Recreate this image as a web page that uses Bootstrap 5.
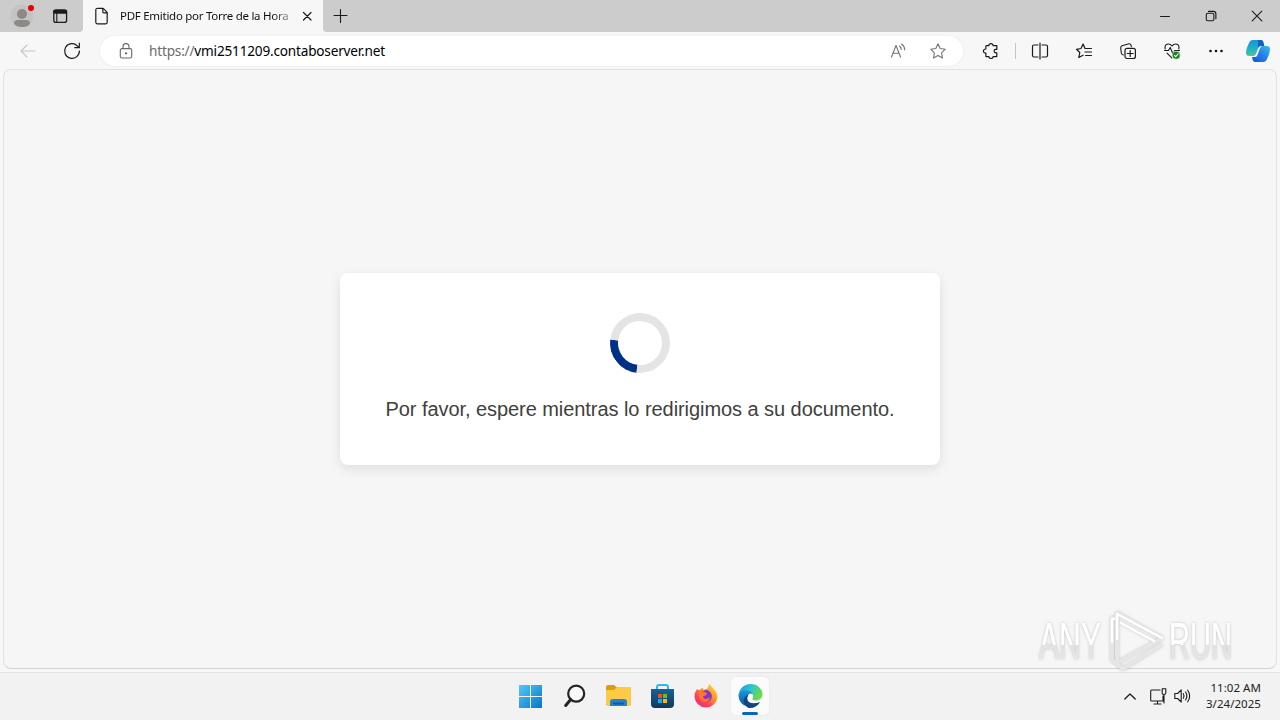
<!DOCTYPE html>
<html lang="es">
<head>
<meta charset="utf-8">
<meta name="viewport" content="width=device-width, initial-scale=1">
<title>PDF Emitido por Torre de la Hora</title>
<link href="https://cdn.jsdelivr.net/npm/bootstrap@5.3.0/dist/css/bootstrap.min.css" rel="stylesheet">
<style>
body{font-family:"Noto Sans","Open Sans",sans-serif;background:#f7f7f7;color:#111;height:720px}
svg{display:block;fill:none;stroke:#1b1b1b;stroke-width:1.1;stroke-linecap:round;stroke-linejoin:round;overflow:visible}
.titlebar{height:32px;background:#f7f7f7}
.strip{background:#ccc;height:32px}
.strip-left{width:83px;border-bottom-right-radius:4px;padding-left:12px;gap:19px}
.strip-right{border-bottom-left-radius:4px;padding-left:7px}
.browser-tab{width:240px;padding-left:8px;background:#f7f7f7}
.tab-title{width:174px;margin-left:11px;font-size:11.5px;line-height:16px;letter-spacing:-.27px;color:#111;-webkit-mask-image:linear-gradient(90deg,#000 152px,rgba(0,0,0,.25) 174px)}
.winbtn{width:46px}
.toolbar{height:37px;padding-top:1px}
.cell{width:44px}
.address{width:863px;height:30px;margin-left:5px;border-radius:15px;box-shadow:0 0 3px rgba(0,0,0,.07)}
.lock{width:52px}
.url{font-size:13.6px;line-height:20px;letter-spacing:-.19px;color:#000;margin-left:-3px}
.url span{color:#6c6c6c}
.tools{width:317px}
.viewport{height:600px;margin:0 3px;background:#f6f6f6;border:1px solid #e2e2e2;border-bottom-color:#d3d3d3;border-radius:8px}
.notice{width:600px;height:192px;border-radius:8px;padding-top:40px;box-shadow:0 4px 12px rgba(0,0,0,.1)}
.loader{width:60px;height:60px;border:8px solid #e4e4e4;border-top-color:#003087;border-radius:50%;transform:rotate(231.6deg)}
.message{font-family:"Liberation Sans",Arial,sans-serif;font-size:20px;line-height:30px;letter-spacing:-.06px;color:#404040;margin-top:21px}
.taskbar{height:48px;margin-top:3px;padding-bottom:1px;background:#f2f2f2;border-top:1px solid #e3e3e3}
.active-app{width:38px;height:38px;background:#fbfbfb;border-radius:4px;box-shadow:0 0 1px rgba(0,0,0,.2)}
.active-app i{width:16px;height:3px;border-radius:2px;background:#0868b8;bottom:0;left:11px}
.clock{font-size:11.5px;line-height:16px;color:#222;letter-spacing:.05px}
.tray{right:19px;top:0;height:46px}
.brandmark{left:1030px;top:604px;pointer-events:none}
</style>
</head>
<body class="overflow-hidden position-relative">
<header>
<div class="titlebar d-flex">
  <div class="strip strip-left d-flex align-items-center">
    <svg width="21" height="28" viewBox="0 0 21 28" stroke="none"><circle cx="10" cy="14" r="11.5" fill="#c3c3c3" stroke="none"/><g fill="#8d8987" stroke="none"><circle cx="10" cy="12" r="5"/><path d="M2 21.500q0-3.500 4-3.500h8q4 0 4 3.500-2 3.500-8 3.500T2 21.500z"/></g><circle cx="19" cy="6" r="3" fill="#e90000" stroke="none"/></svg>
    <svg width="16" height="16" viewBox="0 0 16 16"><rect x="1.800" y="1.800" width="12.800" height="12.600" rx="2.200" stroke-width="1.300"/><path d="M2.300 3h11.800M2.300 4.600h11.800" stroke-width="2.200"/><path d="M4.800 5v9"/></svg>
  </div>
  <div class="browser-tab d-flex align-items-center">
    <svg class="ms-1 flex-shrink-0" width="14" height="18" viewBox="0 0 14 18"><path d="M2.800 1.300h5.400l4 4v9.900a1.600 1.600 0 0 1-1.600 1.600H2.400A1.600 1.600 0 0 1 .8 15.200V2.900a1.600 1.600 0 0 1 2-1.600zM7.800 1.400v3.400q0 1 1 1h3.300" stroke-width="1.200"/></svg>
    <div class="tab-title text-nowrap flex-shrink-0">PDF Emitido por Torre de la Hora</div>
    <svg class="ms-2 flex-shrink-0" width="10" height="10" viewBox="0 0 10 10"><path d="M1.500 1.500l7.500 7.500M9 1.500L1.500 9" stroke-width="1.200"/></svg>
  </div>
  <div class="strip strip-right flex-grow-1 d-flex align-items-center">
    <svg width="20" height="16" viewBox="0 0 20 16"><path d="M10.500 1.500v13M4 7.500h13"/></svg>
    <div class="ms-auto d-flex">
      <div class="winbtn d-flex justify-content-center"><svg width="12" height="12" viewBox="0 0 12 12"><path d="M1.500 6.500h9" stroke-width="1"/></svg></div>
      <div class="winbtn d-flex justify-content-center"><svg width="12" height="12" viewBox="0 0 12 12"><rect x="1.300" y="3.200" width="7.600" height="7.600" rx="1.500"/><path d="M3.500 1.400h4.800q2.600 0 2.600 2.600v4.800"/></svg></div>
      <div class="winbtn d-flex justify-content-center"><svg width="12" height="12" viewBox="0 0 12 12"><path d="M1.200 1.200l9.600 9.600M10.800 1.200l-9.600 9.600"/></svg></div>
    </div>
  </div>
</div>
<nav class="toolbar d-flex align-items-center" aria-label="Navegador">
  <div class="cell ms-1 d-flex justify-content-center ps-1"><svg width="16" height="14" viewBox="0 0 16 14" style="stroke:#c7c7c7"><path d="M15 7H1M7 1L1 7l6 6"/></svg></div>
  <div class="cell d-flex justify-content-center ps-1"><svg width="18" height="18" viewBox="0 0 18 18"><path d="M16.400 9a7.400 7.400 0 1 1-2.100-5.200L16 5.600M16.300 1.200v4.500h-4.500" stroke-width="1.200"/></svg></div>
  <div class="address bg-white d-flex align-items-center ms-2 flex-shrink-0">
    <div class="lock d-flex justify-content-center flex-shrink-0"><svg width="14" height="16" viewBox="0 0 14 16" style="stroke:#696969"><rect x="1.300" y="5.600" width="11.400" height="9.400" rx="1.600"/><path d="M4 5.300V3.600a3 3 0 0 1 6 0v1.700"/><circle cx="7" cy="10.300" r=".6" fill="#666"/></svg></div>
    <div class="url text-nowrap me-auto"><span>https://</span>vmi2511209.contaboserver.net</div>
    <svg class="flex-shrink-0" width="16" height="16" viewBox="0 0 16 16" style="stroke:#747474"><path d="M1.500 14L6 2.500 10.500 14M3 10.200h6M9.500 3q1.700 1.400 1.700 3.500M11.500 1q3.200 2.200 3.200 5.800"/></svg>
    <svg class="flex-shrink-0" width="16" height="16" viewBox="0 0 16 16" style="margin:0 17px 0 24px;stroke:#747474"><path d="M8 .8l2.200 4.700 5 .7-3.600 3.600.9 5.200L8 12.500 3.500 15l.9-5.200L.8 6.200l5-.7z"/></svg>
  </div>
  <div class="tools d-flex align-items-center">
    <div class="d-flex justify-content-center" style="width:52px"><svg width="16" height="16" viewBox="0 0 16 16" style="margin-left:3px"><path d="M3.300 2.600h2.600a2.100 1.900 0 0 1 4.200 0h3.700v3.800h-1a1.700 1.700 0 0 0 0 3.400h1v3.800h-3.700a2.100 1.900 0 0 1-4.200 0H2.900V10.200h-.4a2.100 2.100 0 0 1 0-4.200h.4V3z" stroke-width="1.200"/></svg></div>
    <div class="vr" style="height:16px;align-self:center;opacity:.22"></div>
    <div class="cell d-flex justify-content-center ms-1" style="margin-left:2px!important"><svg width="16" height="16" viewBox="0 0 16 16"><path d="M6 2H1.800Q.5 2 .5 3.500v9Q.5 14 2 14h4M8 0v16M10 2h4q1.500 0 1.500 1.500v9Q15.500 14 14 14h-4" stroke-width="1.200"/></svg></div>
    <div class="cell d-flex justify-content-center"><svg width="16" height="16" viewBox="0 0 16 16"><path d="M10.400 5.500H9L7.100 1 5 5.500.5 6.300l3.300 3.200-1 5 4.200-2.300M10.400 5.500h5M9 9h6.500M9.500 12.500h6" stroke-width="1.200"/></svg></div>
    <div class="cell d-flex justify-content-center"><svg width="16" height="16" viewBox="0 0 16 16"><path d="M3.300 12Q1.500 11.500 1.300 10L.7 5Q.5 3.500 2 2.800L9 .8q1.500-.3 2 1.400l.4 1.300"/><rect x="5" y="5.300" width="10.400" height="10.200" rx="2" stroke-width="1.200"/><path d="M10.200 7.500v6M7.200 10.500h6" stroke-width="1.200"/></svg></div>
    <div class="cell d-flex justify-content-center"><svg width="16" height="16" viewBox="0 0 16 16"><path d="M1.200 6C0 1 5-.5 8 3c3-3.500 8-2 6.800 3M.5 7.500h4L6.200 4.500 9 11l1.800-3.500h4.700M3 10.200l4.800 4.700"/><circle cx="12.200" cy="12.200" r="4" fill="#168024" stroke="#f7f7f7" stroke-width=".6"/><path d="M10.400 12.300l1.300 1.300 2.500-2.700" stroke="#fff"/></svg></div>
    <div class="cell d-flex justify-content-center"><svg width="16" height="4" viewBox="0 0 16 4"><g fill="#111" stroke="none"><circle cx="2.500" cy="2" r="1.300"/><circle cx="8" cy="2" r="1.300"/><circle cx="13.500" cy="2" r="1.300"/></g></svg></div>
    <svg class="flex-shrink-0" width="24" height="24" viewBox="0 0 24 24" style="margin-left:8px"><defs><linearGradient id="ca" x1="0" y1="0" x2="0" y2="1"><stop stop-color="#1594df"/><stop offset=".55" stop-color="#22b0c8"/><stop offset="1" stop-color="#4cc98c"/></linearGradient><linearGradient id="cb" x1="1" y1="0" x2="0" y2="1"><stop stop-color="#35c1ee"/><stop offset=".5" stop-color="#257fe9"/><stop offset="1" stop-color="#1551d7"/></linearGradient></defs><g stroke="none"><path d="M7 1h8q2 0 2.500 3L18 6h-3q-2 0-2.700 2.500l-2 5.500q-.8 3-3.300 3H3q-3 0-3-3Q0 10 3 4q1-3 4-3z" fill="url(#ca)"/><path d="M17 23H9q-2 0-2.500-3L6 18h3q2 0 2.700-2.500l2-5.500q.8-3 3.300-3h4q3 0 3 3 0 4-3 10-1 3-4 3z" fill="url(#cb)"/><path d="M12 1h3q2 0 2.500 3l.9 3h-3.400q-2 0-3 2z" fill="#1462ba"/></g></svg>
  </div>
</nav>
</header>
<main class="viewport d-flex align-items-center justify-content-center">
  <section class="notice bg-white d-flex flex-column align-items-center">
    <div class="loader"></div>
    <p class="message mb-0 text-nowrap">Por favor, espere mientras lo redirigimos a su documento.</p>
  </section>
</main>
<footer class="taskbar position-relative d-flex align-items-center">
  <div class="d-flex align-items-center" style="margin-left:519px;gap:20px">
    <svg width="23" height="23" viewBox="0 0 23 23"><defs><linearGradient id="wi" x1="0" y1="0" x2="1" y2="1"><stop stop-color="#54c9f5"/><stop offset="1" stop-color="#0873c9"/></linearGradient></defs><path d="M0 0h11v11H0zM12 0h11v11H12zM0 12h11v11H0zM12 12h11v11H12z" fill="url(#wi)" stroke="none"/></svg>
    <svg width="24" height="24" viewBox="0 0 24 24"><circle cx="14.200" cy="9.700" r="8" stroke="#242424" stroke-width="2.200" fill="#f8f8f8"/><path d="M8.700 15.500L3.700 21.500" stroke="#242424" stroke-width="3"/></svg>
    <svg width="25" height="22" viewBox="0 0 25 22"><g stroke="none"><path d="M0 2Q0 0 2 0h6l2.500 2H23q2 0 2 2v16H0z" fill="#dc9b12"/><path d="M0 5h8l3-3h12q2 0 2 2v15q0 2-2 2H2q-2 0-2-2z" fill="#fccb45"/><path d="M4 21v-4q0-3 3-3h11q3 0 3 3v4z" fill="#2382cb"/><path d="M7 17.500h11v2H7z" fill="#0b5aa2"/></g></svg>
    <svg width="23" height="24" viewBox="0 0 23 24"><defs><linearGradient id="st" x1="0" y1="0" x2="0" y2="1"><stop stop-color="#17629c"/><stop offset="1" stop-color="#12365e"/></linearGradient></defs><path d="M6 6V3q0-2 2-2h7q2 0 2 2v3" stroke="#30b8ec" stroke-width="2"/><path d="M0 5h23v15q0 4-4 4H4q-4 0-4-4z" fill="url(#st)" stroke="none"/><g stroke="none"><path fill="#f25022" d="M7 10h4v4H7z"/><path fill="#7fba00" d="M12 10h4v4h-4z"/><path fill="#20a7e8" d="M7 15h4v4H7z"/><path fill="#ffb900" d="M12 15h4v4h-4z"/></g></svg>
    <svg width="24" height="24" viewBox="0 0 24 24"><defs><linearGradient id="fi" x1="1" y1="0" x2=".2" y2="1"><stop stop-color="#ffe84a"/><stop offset=".4" stop-color="#ff9e20"/><stop offset=".75" stop-color="#fd405b"/><stop offset="1" stop-color="#e52f8a"/></linearGradient></defs><g stroke="none"><path d="M3 5q1 1 2.200 1.200Q7 4.500 9 4l.5 2 4-1.500Q14 1 16 0q.5 2 3 4 5 5 4.300 10A11.500 11.500 0 0 1 .5 13Q.5 8 3 5z" fill="url(#fi)"/><path d="M7 9q4-5 8-2 5 4 1.500 9-5 4-9-.5L6 12z" fill="#8136cc"/><path d="M5 7l6 1 2 1.500-1 1.800-3 1 1 2.200q3 1.500 6-1.500 0 5-6 5Q5 17 5 11z" fill="#ff762a"/></g></svg>
    <div class="active-app position-relative d-flex justify-content-center" style="margin-left:-7px;padding-top:7px"><svg width="25" height="24" viewBox="0 0 24 24"><defs><linearGradient id="ea" x1="0" y1="0" x2="1" y2=".4"><stop stop-color="#2292e2"/><stop offset=".5" stop-color="#2ac3d3"/><stop offset="1" stop-color="#6bda4a"/></linearGradient><linearGradient id="eb" x1="0" y1="0" x2="0" y2="1"><stop stop-color="#1c96df"/><stop offset="1" stop-color="#0c54a0"/></linearGradient></defs><g stroke="none"><path d="M0 12A12 12 0 0 1 12 0c7 0 12 5 12 10 0 4-3 6.500-6.500 6.500-2.500 0-4-.8-3.500-2 2-3-.5-6-4-6C5 8.500 1 9 0 12z" fill="url(#ea)"/><path d="M0 12Q2 5 9 6.500q4 .5 5 3.500-5-2-5.500 4c0 5 6 8 13 4.200A12 12 0 0 1 0 12z" fill="url(#eb)"/><path d="M11 9.500q-3 3-2 6.500 2 5 12.500 2.200-5 7-12 5.500Q0 16 11 9.500z" fill="#124580"/></g></svg><i class="position-absolute"></i></div>
  </div>
  <div class="tray position-absolute d-flex align-items-center">
    <svg width="12" height="7" viewBox="0 0 12 7" style="margin-right:14px"><path d="M.8 6L6 1l5.200 5" stroke-width="1.300"/></svg>
    <svg width="17" height="17" viewBox="0 0 17 17"><path d="M10 2H1.500Q.7 2 .7 3v9.200q0 .8.800.8H13V8M7.500 13v3M4 16h7M12.200.8h3.600V5q0 1.500-1.800 1.500T12.200 5zM14 6.500V15" stroke-width="1.100"/></svg>
    <svg width="17" height="16" viewBox="0 0 17 16" style="margin:0 15px 0 7px"><path d="M.8 5.500h2.800L7.200 2v12l-3.600-3.500H.8zM9.300 5.700q1.500 2.300 0 4.600M11.500 4q2.800 4 0 8M13.700 2.200q4 5.800 0 11.600"/></svg>
    <div class="clock text-end">11:02 AM<br>3/24/2025</div>
  </div>
</footer>
<svg class="brandmark position-absolute" width="210" height="72" viewBox="0 0 210 72" aria-label="ANY RUN"><defs><linearGradient id="wm" x1="0" y1="0" x2="0" y2="1"><stop offset=".56" stop-color="#fff"/><stop offset=".57" stop-color="#e2e2e2"/><stop offset="1" stop-color="#e9e9e9"/></linearGradient><filter id="ws" x="-20%" y="-20%" width="140%" height="140%"><feDropShadow dx="0" dy="0" stdDeviation="1.500" flood-color="#888" flood-opacity=".5"/></filter></defs><g filter="url(#ws)"><g font-family="Liberation Sans Narrow, Liberation Sans, sans-serif" font-size="51" fill="url(#wm)" stroke="none"><text x="9" y="55" textLength="62" lengthAdjust="spacingAndGlyphs">ANY</text><text x="139" y="55" textLength="63" lengthAdjust="spacingAndGlyphs">RUN</text></g><path d="M86 14h-4v42l11 9 38-24M87 55V9l45 25-45 25z" stroke="#e6e6e6" stroke-width="3.500"/><path d="M84 15h-2v23M87 35V10l45 24M91 19l33 18" stroke="#fff" stroke-width="2.500"/></g></svg>
<script src="https://cdn.jsdelivr.net/npm/bootstrap@5.3.0/dist/js/bootstrap.bundle.min.js"></script>
</body>
</html>
